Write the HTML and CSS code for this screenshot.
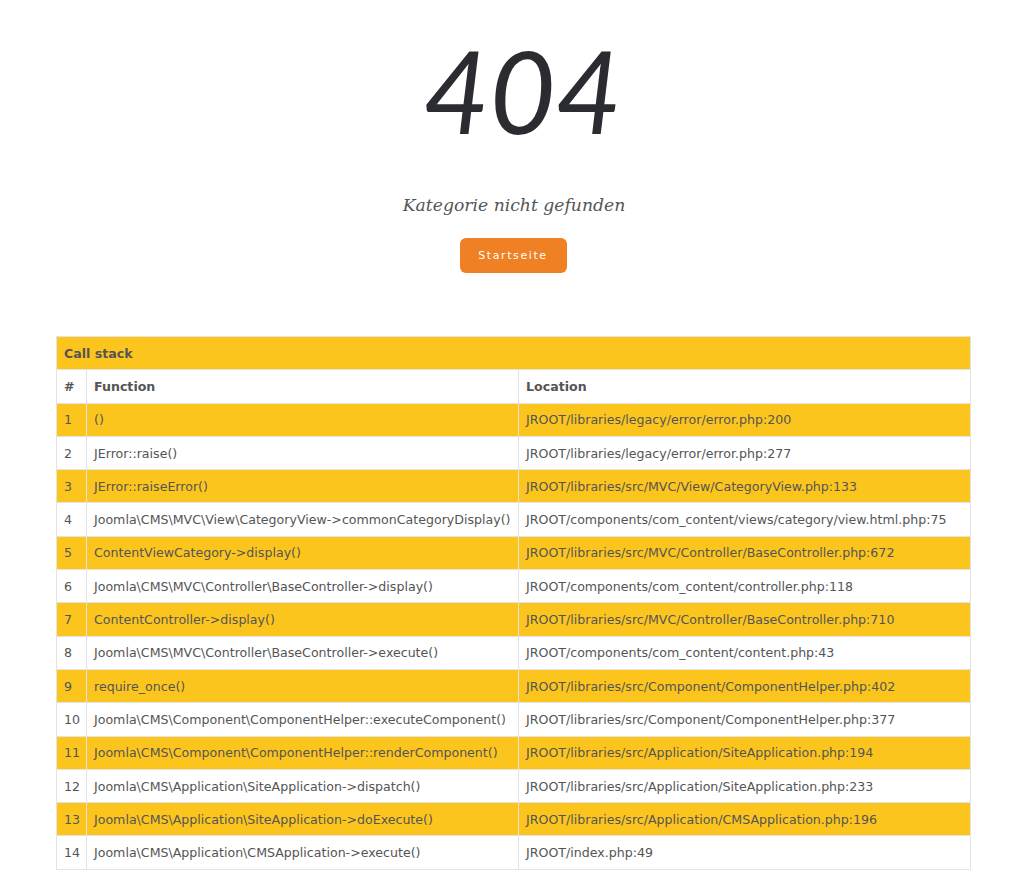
FILE: index.html
```html
<!DOCTYPE html>
<html lang="de">
<head>
  <meta charset="UTF-8" />
  <meta name="viewport" content="width=device-width, initial-scale=1.0"/>
  <title>404 - Kategorie nicht gefunden</title>
  <link rel="stylesheet" href="styles.css">
</head>
<body>
  <!-- Error message -->
  <div class="error-box">
    <h1 class="error-code">404</h1>
    <p class="error-message">Kategorie nicht gefunden</p>
    <a class="btn-home" href="#">Startseite</a>
  </div>

  <!-- Debug call stack -->
  <div class="debug">
    <table class="callstack">
      <colgroup>
        <col class="col-num">
        <col class="col-fn">
        <col>
      </colgroup>
      <thead>
        <tr class="title"><th colspan="3">Call stack</th></tr>
        <tr class="cols"><th>#</th><th>Function</th><th>Location</th></tr>
      </thead>
      <tbody>
        <tr class="odd"><td>1</td><td>()</td><td>JROOT/libraries/legacy/error/error.php:200</td></tr>
        <tr><td>2</td><td>JError::raise()</td><td>JROOT/libraries/legacy/error/error.php:277</td></tr>
        <tr class="odd"><td>3</td><td>JError::raiseError()</td><td>JROOT/libraries/src/MVC/View/CategoryView.php:133</td></tr>
        <tr><td>4</td><td>Joomla\CMS\MVC\View\CategoryView-&gt;commonCategoryDisplay()</td><td>JROOT/components/com_content/views/category/view.html.php:75</td></tr>
        <tr class="odd"><td>5</td><td>ContentViewCategory-&gt;display()</td><td>JROOT/libraries/src/MVC/Controller/BaseController.php:672</td></tr>
        <tr><td>6</td><td>Joomla\CMS\MVC\Controller\BaseController-&gt;display()</td><td>JROOT/components/com_content/controller.php:118</td></tr>
        <tr class="odd"><td>7</td><td>ContentController-&gt;display()</td><td>JROOT/libraries/src/MVC/Controller/BaseController.php:710</td></tr>
        <tr><td>8</td><td>Joomla\CMS\MVC\Controller\BaseController-&gt;execute()</td><td>JROOT/components/com_content/content.php:43</td></tr>
        <tr class="odd"><td>9</td><td>require_once()</td><td>JROOT/libraries/src/Component/ComponentHelper.php:402</td></tr>
        <tr><td>10</td><td>Joomla\CMS\Component\ComponentHelper::executeComponent()</td><td>JROOT/libraries/src/Component/ComponentHelper.php:377</td></tr>
        <tr class="odd"><td>11</td><td>Joomla\CMS\Component\ComponentHelper::renderComponent()</td><td>JROOT/libraries/src/Application/SiteApplication.php:194</td></tr>
        <tr><td>12</td><td>Joomla\CMS\Application\SiteApplication-&gt;dispatch()</td><td>JROOT/libraries/src/Application/SiteApplication.php:233</td></tr>
        <tr class="odd"><td>13</td><td>Joomla\CMS\Application\SiteApplication-&gt;doExecute()</td><td>JROOT/libraries/src/Application/CMSApplication.php:196</td></tr>
        <tr><td>14</td><td>Joomla\CMS\Application\CMSApplication-&gt;execute()</td><td>JROOT/index.php:49</td></tr>
      </tbody>
    </table>
  </div>
</body>
</html>
```

FILE: styles.css
```css
* { box-sizing: border-box; margin: 0; padding: 0; }
body {
  background: #fff;
  color: #555;
  font-family: "DejaVu Sans", sans-serif;
}

.error-box {
  display: flex;
  flex-direction: column;
  align-items: center;
  padding: 22px 0 0 16px;
}

.error-code {
  font-family: Lato, sans-serif;
  font-style: italic;
  font-weight: 400;
  font-size: 114px;
  line-height: 136px;
  color: #2b2c31;
  margin-left: 17px;
}

.error-message {
  font-family: "DejaVu Serif", serif;
  font-style: italic;
  font-size: 17.2px;
  color: #555;
  margin-top: 37px;
}

.btn-home {
  display: inline-block;
  margin: 23px 0 0 -2px;
  width: 107px;
  height: 35px;
  line-height: 35px;
  text-align: center;
  background-color: #f08024;
  border-radius: 6px;
  color: #fff;
  font-size: 11px;
  letter-spacing: 1.6px;
  text-decoration: none;
}

.debug {
  width: 915px;
  margin: 63px 0 0 56px;
}

.callstack {
  width: 100%;
  border-collapse: collapse;
  table-layout: fixed;
  font-size: 12.6px;
}

.callstack .col-num { width: 30px; }
.callstack .col-fn { width: 432px; }

.callstack th,
.callstack td {
  border: 1px solid #e3e3e3;
  height: 33.3px;
  padding: 0 7px;
  text-align: left;
  white-space: nowrap;
  overflow: hidden;
}

.callstack th { font-weight: bold; }

.callstack .title th { background: #fcc51e; }

.callstack tr.odd td { background: #fcc51e; }
```
